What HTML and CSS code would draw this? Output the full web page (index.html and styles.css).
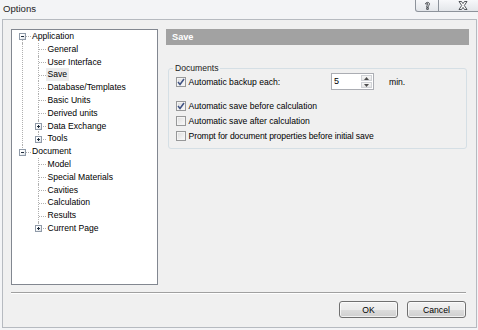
FILE: index.html
```html
<!DOCTYPE html>
<html>
<head>
<meta charset="utf-8">
<title>Options</title>
<link rel="stylesheet" href="styles.css">
</head>
<body>
<div class="titlebar">
  <div class="title">Options</div>
  <div class="caption">
    <div class="cbtn help">
      <svg width="9" height="9" viewBox="0 0 9 9"><path d="M2.5 3 C2.5 0.8 6.5 0.8 6.5 3 C6.5 4.2 5.3 4.4 5.3 5.4 L5.3 6.2 L3.7 6.2 L3.7 5.2 C3.7 4.1 5 3.9 5 3 C5 2.2 4 2.2 4 3 Z M3.7 6.8 L5.3 6.8 L5.3 8.4 L3.7 8.4 Z" fill="#fff" stroke="#2a2e35" stroke-width="0.8"/></svg>
    </div>
    <div class="cbtn close">
      <svg width="10" height="9" viewBox="0 0 10 9"><path d="M1 0.5 L3.5 0.5 L5 2.6 L6.5 0.5 L9 0.5 L6.3 4.5 L9 8.5 L6.5 8.5 L5 6.4 L3.5 8.5 L1 8.5 L3.7 4.5 Z" fill="#fff" stroke="#2a2e35" stroke-width="0.8"/></svg>
    </div>
  </div>
</div>
<div class="dialog">
  <div class="main">
    <div class="tree">
      <div class="node">
        <div class="row root first"><span class="twig"><span class="exp minus"></span></span><span class="lbl">Application</span></div>
        <div class="kids">
          <div class="row"><span class="twig"></span><span class="lbl">General</span></div>
          <div class="row"><span class="twig"></span><span class="lbl">User Interface</span></div>
          <div class="row"><span class="twig"></span><span class="lbl sel">Save</span></div>
          <div class="row"><span class="twig"></span><span class="lbl">Database/Templates</span></div>
          <div class="row"><span class="twig"></span><span class="lbl">Basic Units</span></div>
          <div class="row"><span class="twig"></span><span class="lbl">Derived units</span></div>
          <div class="row"><span class="twig"><span class="exp plus"></span></span><span class="lbl">Data Exchange</span></div>
          <div class="row last"><span class="twig"><span class="exp plus"></span></span><span class="lbl">Tools</span></div>
        </div>
      </div>
      <div class="node">
        <div class="row root lastroot"><span class="twig"><span class="exp minus"></span></span><span class="lbl">Document</span></div>
        <div class="kids nokidline">
          <div class="row"><span class="twig"></span><span class="lbl">Model</span></div>
          <div class="row"><span class="twig"></span><span class="lbl">Special Materials</span></div>
          <div class="row"><span class="twig"></span><span class="lbl">Cavities</span></div>
          <div class="row"><span class="twig"></span><span class="lbl">Calculation</span></div>
          <div class="row"><span class="twig"></span><span class="lbl">Results</span></div>
          <div class="row last"><span class="twig"><span class="exp plus"></span></span><span class="lbl">Current Page</span></div>
        </div>
      </div>
    </div>
    <div class="panel">
      <div class="header">Save</div>
      <fieldset class="group">
        <legend>Documents</legend>
        <div class="opt first">
          <label class="check-col"><span class="cb checked"><svg width="8" height="8" viewBox="0 0 8 8"><path d="M1 4 L3 6.5 L7 1" fill="none" stroke="#3f5283" stroke-width="1.5"/></svg></span><span>Automatic backup each:</span></label>
          <div class="spin">
            <div class="spin-val">5</div>
            <div class="spin-arrows">
              <div class="arrow up"><svg width="5" height="3" viewBox="0 0 5 3"><path d="M0 3 L2.5 0 L5 3 Z" fill="#4d4d4d"/></svg></div>
              <div class="arrow down"><svg width="5" height="3" viewBox="0 0 5 3"><path d="M0 0 L2.5 3 L5 0 Z" fill="#4d4d4d"/></svg></div>
            </div>
          </div>
          <span class="unit">min.</span>
        </div>
        <label class="opt second"><span class="cb checked"><svg width="8" height="8" viewBox="0 0 8 8"><path d="M1 4 L3 6.5 L7 1" fill="none" stroke="#3f5283" stroke-width="1.5"/></svg></span><span>Automatic save before calculation</span></label>
        <label class="opt"><span class="cb"></span><span>Automatic save after calculation</span></label>
        <label class="opt"><span class="cb"></span><span class="tight">Prompt for document properties before initial save</span></label>
      </fieldset>
    </div>
  </div>
  <div class="separator"></div>
  <div class="buttons">
    <button class="btn">OK</button>
    <button class="btn">Cancel</button>
  </div>
</div>
</body>
</html>
```
FILE: styles.css
```css
* { box-sizing: border-box; }
html, body { margin: 0; padding: 0; }
body {
  width: 478px;
  height: 330px;
  overflow: hidden;
  background: #f3f4f6;
  font-family: "Liberation Sans", Arial, sans-serif;
  font-size: 8.6px;
  color: #000;
}
.titlebar {
  height: 19px;
  display: flex;
  justify-content: space-between;
  align-items: flex-start;
}
.title {
  padding-left: 3px;
  font-size: 9.6px;
  line-height: 18px;
  color: #1e1e1e;
}
.caption {
  display: flex;
  margin-right: -9px;
}
.cbtn {
  height: 12px;
  border: 1px solid #8d939b;
  border-top: none;
  background: linear-gradient(#f7f8fa, #e3e6ea);
  display: flex;
  align-items: center;
  justify-content: center;
}
.cbtn svg { display: block; }
.help { width: 24px; border-radius: 0 0 0 3px; }
.close { width: 48px; border-left: none; border-radius: 0 0 3px 0; }

.dialog {
  margin: 0 1px 0 2px;
  height: 309px;
  border: 1px solid #b6bac0;
  background: #f0f0f0;
}
.main {
  display: flex;
  gap: 8px;
  padding: 9px 7px 0 8px;
}
.tree {
  width: 147px;
  height: 256px;
  flex: none;
  background: #fff;
  border: 1px solid #828790;
}
.row {
  display: flex;
  align-items: stretch;
  height: 12.8px;
  line-height: 12.8px;
  white-space: nowrap;
}
.row.root { padding-left: 7px; }
.twig {
  position: relative;
  flex: none;
  width: 11px;
}
.root .twig { width: 13px; }
.twig::before {
  content: "";
  position: absolute;
  left: 3px;
  top: 0;
  bottom: 0;
  border-left: 1px dotted #b0b0b0;
}
.twig::after {
  content: "";
  position: absolute;
  left: 4px;
  width: 7px;
  top: 50%;
  border-top: 1px dotted #b0b0b0;
}
.root .twig::after { left: 7px; width: 5px; }
.row.last .twig::before { bottom: 50%; }
.root.first .twig::before { top: 50%; }
.root.lastroot .twig::before { bottom: 50%; }
.exp {
  position: absolute;
  left: 0;
  top: 50%;
  width: 7px;
  height: 7px;
  margin-top: -3px;
  border: 1px solid #8f9aa8;
  background: linear-gradient(135deg, #fff 30%, #dde1e6);
  z-index: 1;
}
.exp::before {
  content: "";
  position: absolute;
  left: 1px;
  top: 2px;
  width: 3px;
  height: 1px;
  background: #1f2d3d;
}
.exp.plus::after {
  content: "";
  position: absolute;
  left: 2px;
  top: 1px;
  width: 1px;
  height: 3px;
  background: #1f2d3d;
}
.lbl { padding-left: 1.5px; }
.root .lbl { padding-left: 0; }
.lbl.sel {
  background: #ececec;
  padding: 0 2px 0 1.5px;
}
.kids {
  margin-left: 10px;
  border-left: 1px dotted #b0b0b0;
  padding-left: 12px;
}
.kids.nokidline { border-left-color: transparent; }

.panel {
  width: 303px;
  flex: none;
}
.header {
  height: 16px;
  line-height: 16px;
  background: #a2a2a2;
  color: #fff;
  font-weight: bold;
  font-size: 9.2px;
  padding-left: 6px;
}
.group {
  margin: 18px 2px 0 2px;
  padding: 0 0 5px 7px;
  border: 1px solid #d5dfe5;
  border-radius: 3px;
  min-width: 0;
}
.group legend {
  margin-left: -3px;
  padding: 0 2px;
  line-height: 10px;
  color: #1a1a1a;
}
.opt {
  display: flex;
  align-items: center;
  height: 15px;
  white-space: nowrap;
}
.opt.first { height: 17px; }
.opt.second { margin-top: 8px; }
.tight { letter-spacing: -0.1px; }
.check-col {
  display: flex;
  align-items: center;
  width: 155px;
  flex: none;
}
.cb {
  width: 10px;
  height: 10px;
  flex: none;
  border: 1px solid #979899;
  background: linear-gradient(135deg, #dcdcdc, #fbfbfb);
  box-shadow: inset 0 0 0 1px #f4f4f4;
  margin-right: 2.5px;
  display: flex;
  align-items: center;
  justify-content: center;
}
.cb svg { display: block; }
.spin {
  display: flex;
  width: 43px;
  height: 17px;
  border: 1px solid #abadb3;
  background: #fff;
  flex: none;
}
.spin-val {
  flex: 1;
  padding-left: 2px;
  line-height: 15px;
  font-size: 9px;
}
.spin-arrows {
  width: 12px;
  display: flex;
  flex-direction: column;
  padding: 1px 1px 1px 0;
  gap: 1px;
}
.arrow {
  flex: 1;
  border: 1px solid #d0d2d6;
  background: linear-gradient(#f6f6f6, #e6e6e6);
  display: flex;
  align-items: center;
  justify-content: center;
}
.arrow svg { display: block; }
.unit { margin-left: 15px; }

.separator {
  margin: 7px 10px 0 8px;
  height: 2px;
  border-top: 1px solid #a0a0a0;
  border-bottom: 1px solid #fff;
}
.buttons {
  display: flex;
  justify-content: flex-end;
  gap: 9px;
  padding: 7px 10px 0 0;
}
.btn {
  width: 59px;
  height: 17px;
  padding: 0;
  border: 1px solid #707070;
  border-radius: 3px;
  background: linear-gradient(#f2f2f2 0%, #ebebeb 50%, #dddddd 50%, #cfcfcf 100%);
  box-shadow: inset 0 0 0 1px rgba(255,255,255,0.7);
  font-family: "Liberation Sans", Arial, sans-serif;
  font-size: 8.6px;
  color: #000;
}
```
